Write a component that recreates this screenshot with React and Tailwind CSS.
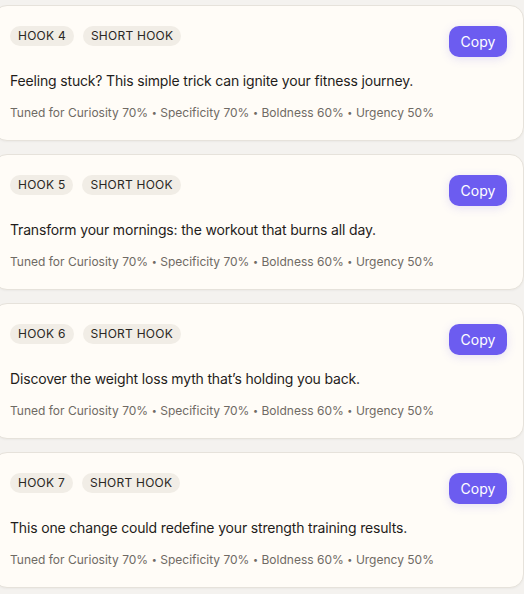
import React from "react";

const hooks = [
  { n: 4, text: "Feeling stuck? This simple trick can ignite your fitness journey." },
  { n: 5, text: "Transform your mornings: the workout that burns all day." },
  { n: 6, text: "Discover the weight loss myth that\u2019s holding you back." },
  { n: 7, text: "This one change could redefine your strength training results." },
];

const tuning = ["Curiosity 70%", "Specificity 70%", "Boldness 60%", "Urgency 50%"];

function HookCard({ n, text }) {
  return (
    <div className="h-[136px] rounded-[14px] border border-[#e6e2db] bg-[#fffcf7] pl-[16px] pr-[16px] pt-[20px] shadow-[0_1px_2px_rgba(0,0,0,0.04)]">
      <div className="flex items-start justify-between">
        <div className="flex gap-[9px]">
          <span className="flex h-[20px] items-center rounded-full bg-[#f1ede6] px-[8px] text-[12px] tracking-[0.02em] text-[#2a2724]">
            HOOK {n}
          </span>
          <span className="flex h-[20px] items-center rounded-full bg-[#f1ede6] px-[8px] text-[12px] tracking-[0.02em] text-[#2a2724]">
            SHORT HOOK
          </span>
        </div>
        <button className="h-[31px] w-[58px] rounded-[10px] bg-[#6c5cf0] text-[14px] text-white shadow-[0_2px_10px_rgba(108,92,240,0.18)]">
          Copy
        </button>
      </div>
      <p className="mt-[14px] text-[14px] leading-[20px] tracking-[-0.012em] text-[#1f1d1b]">{text}</p>
      <p className="mt-[14px] text-[12px] leading-[16px] text-[#6f6a64]">
        Tuned for{" "}
        {tuning.map((t, i) => (
          <React.Fragment key={t}>
            {i > 0 && <span className="mx-[1px] text-[9px] align-[1px]"> • </span>}
            {t}
          </React.Fragment>
        ))}
      </p>
    </div>
  );
}

export default function App() {
  return (
    <div
      className="h-[594px] w-[524px] overflow-hidden bg-[#f4f2ef]"
      style={{ fontFamily: "Inter, 'Noto Sans', sans-serif" }}
    >
      <div className="ml-[-7px] flex flex-col gap-[13px] pt-[5px]">
        {hooks.map((h) => (
          <HookCard key={h.n} {...h} />
        ))}
      </div>
    </div>
  );
}
